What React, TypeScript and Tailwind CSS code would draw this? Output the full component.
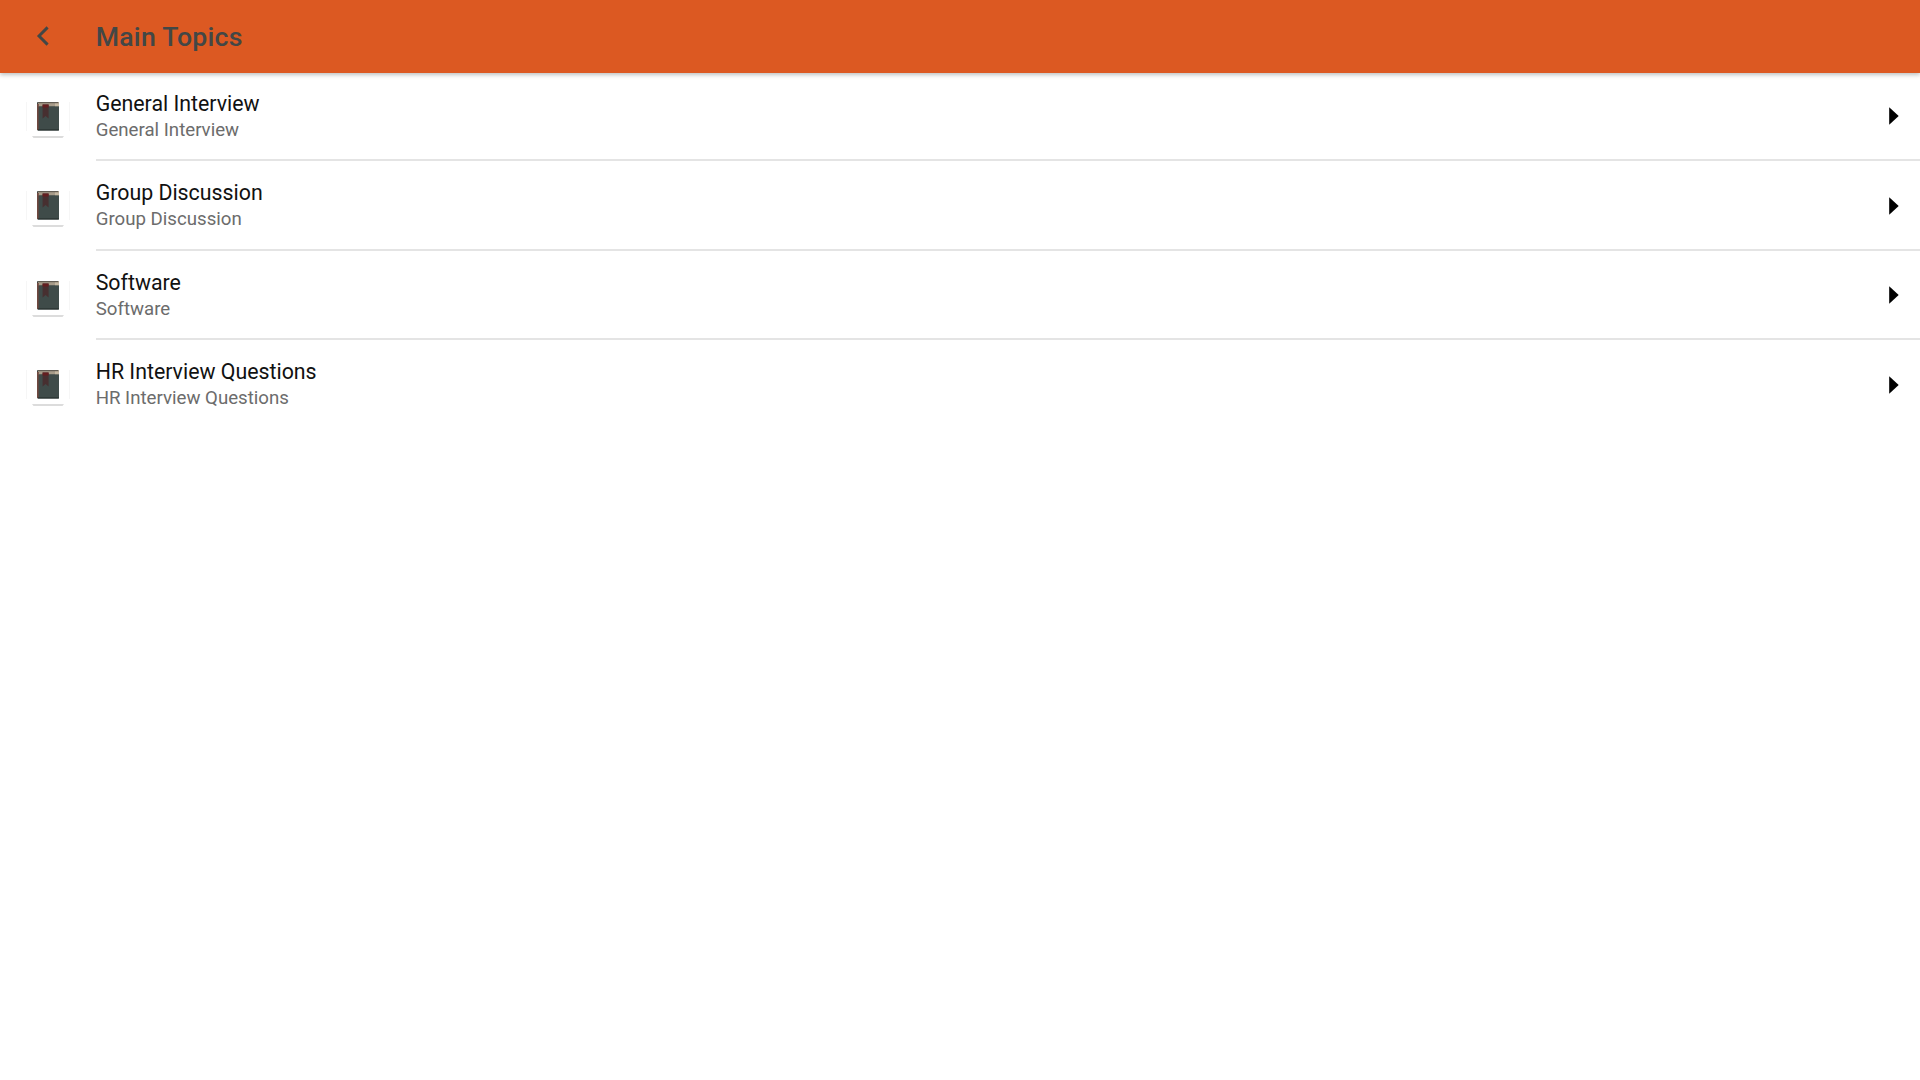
import React from "react";

interface Topic {
  title: string;
  subtitle: string;
}

const TOPICS: Topic[] = [
  { title: "General Interview", subtitle: "General Interview" },
  { title: "Group Discussion", subtitle: "Group Discussion" },
  { title: "Software", subtitle: "Software" },
  { title: "HR Interview Questions", subtitle: "HR Interview Questions" },
];

const BackIcon: React.FC = () => (
  <svg className="w-[14px] h-[20px]" viewBox="0 0 14 20" fill="none">
    <path d="M11.6 1.4 3 10l8.6 8.6" stroke="#424746" strokeWidth="2.9" />
  </svg>
);

const BookIcon: React.FC = () => (
  <svg className="w-12 h-12" viewBox="0 0 48 48">
    <path d="M2.5 10v29M45.5 10v29" stroke="#f6f6f6" strokeWidth="1" />
    <path d="M8 44h32l-1.5 2h-29z" fill="#dcdcdc" />
    <rect x="13" y="10" width="22" height="28.5" rx="1" fill="#3d4745" />
    <path d="M14 10h21v4.5H14z" fill="#a79b89" />
    <path d="M14 10h20v1.2H14z" fill="#625c53" />
    <path d="M31 11.5h4v3h-4z" fill="#c5b7a1" />
    <path d="M13 12h1.8v26H13z" fill="#70483f" />
    <path d="M14.8 14.5H35V38H14.8z" fill="#3f4b49" />
    <path d="M14 37.3h21v1.2H14z" fill="#293330" />
    <path d="M18.6 12.5h6v14l-3-2.6-3 2.6z" fill="#472f30" />
    <path d="M18.6 12.5h6v3h-6z" fill="#641e20" />
  </svg>
);

const ArrowIcon: React.FC = () => (
  <svg className="w-[10px] h-[18px]" viewBox="0 0 10 18">
    <path d="M0.2 0.2 9.7 9 0.2 17.8z" fill="#000" />
  </svg>
);

const TopicRow: React.FC<{ topic: Topic }> = ({ topic }) => (
  <li className="group flex h-[89.5px] pl-6">
    <div className="w-[71.7px] pt-[19.7px]">
      <BookIcon />
    </div>
    <div className="flex flex-1 justify-between border-b-2 border-[#e4e4e4] pr-[21px] group-last:border-transparent">
      <div className="pt-[19.1px]">
        <h2 className="text-[21.33px] leading-[26px] text-[#111]">
          {topic.title}
        </h2>
        <p className="text-[18.67px] leading-[26px] text-[#6c6c6c]">
          {topic.subtitle}
        </p>
      </div>
      <div className="pt-[35.4px]">
        <ArrowIcon />
      </div>
    </div>
  </li>
);

const App: React.FC = () => (
  <div className="min-h-screen bg-white font-[Roboto,sans-serif]">
    <header className="relative flex h-[72.5px] items-center bg-[#dc5922] pl-[36px] shadow-[0_2px_4px_rgba(0,20,20,0.25)]">
      <button type="button" aria-label="Back" className="w-[59.7px]">
        <BackIcon />
      </button>
      <h1 className="pt-px text-[26.67px] leading-8 font-medium tracking-[0.25px] text-[#424746]">
        Main Topics
      </h1>
    </header>
    <ul className="-mt-[0.7px]">
      {TOPICS.map((topic) => (
        <TopicRow key={topic.title} topic={topic} />
      ))}
    </ul>
  </div>
);

export default App;
